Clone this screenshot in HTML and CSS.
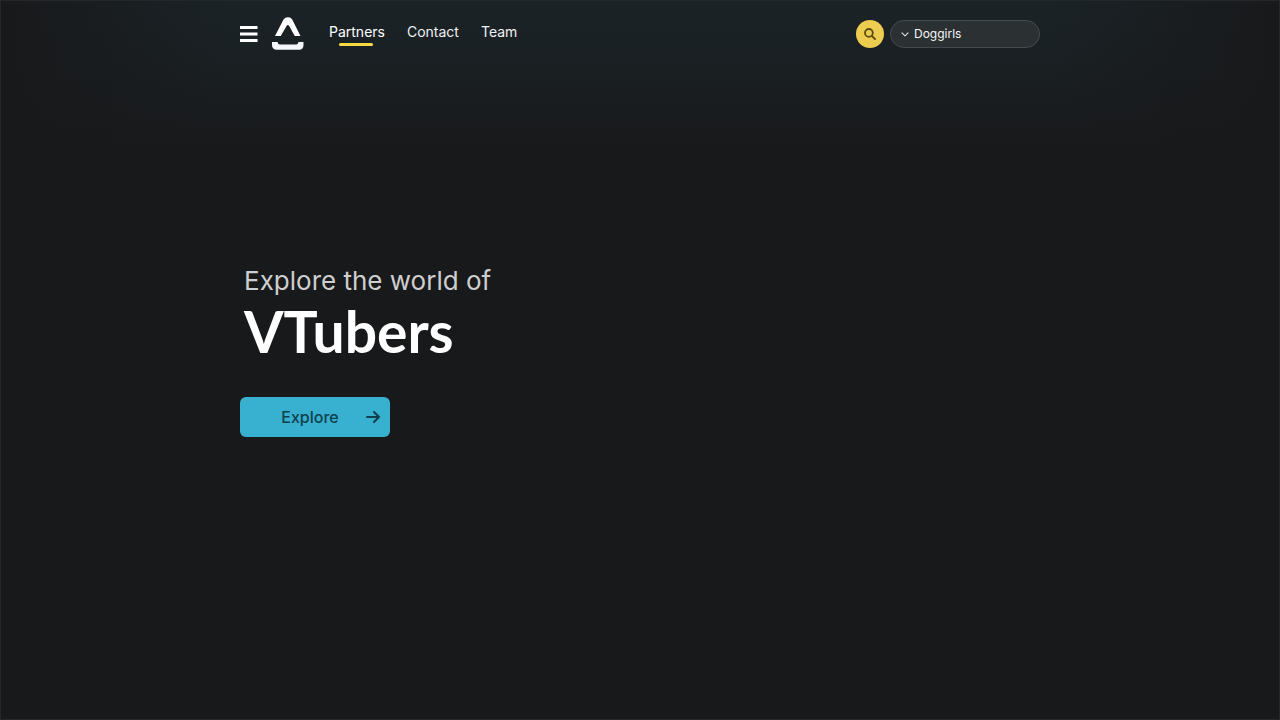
FILE: index.html
```html
<!DOCTYPE html>
<html lang="en">
<head>
<meta charset="utf-8">
<meta name="viewport" content="width=device-width, initial-scale=1">
<title>VTubers</title>
<link rel="stylesheet" href="styles.css">
</head>
<body class="page">
<header class="topbar">
  <button class="menu" type="button" aria-label="Menu">
    <svg width="18" height="16" viewBox="0 0 18 16" aria-hidden="true"><path d="M0 1.500h17.500M0 8h17.500M0 14.500h17.500" stroke="#fff" stroke-width="2.800"/></svg>
  </button>
  <a class="logo" href="#" aria-label="Home">
    <svg width="32" height="34" viewBox="0 0 32 34" aria-hidden="true"><path d="M3 19 11.500 2.500Q13 .2 16 .2T20.200 2.500L28.500 19H22.800L17.200 9Q15.800 7 14.500 9L8.800 19Z" fill="#fff"/><path d="M0 25H5.500Q6 27.500 8 27.500H24Q26 27.500 26.500 25H31.500V28Q31.500 32.800 27 32.800H5Q0 32.800 0 28Z" fill="#f4f7fc"/></svg>
  </a>
  <nav class="nav" aria-label="Main">
    <a class="nav-link nav-link-active" href="#" aria-current="page">Partners</a>
    <a class="nav-link" href="#">Contact</a>
    <a class="nav-link" href="#">Team</a>
  </nav>
  <form class="search">
    <button class="search-button" type="button" aria-label="Search">
      <svg width="12" height="12" viewBox="0 0 12 12" fill="none" stroke="#5a4b10" stroke-width="1.800" stroke-linecap="round" aria-hidden="true"><circle cx="4.900" cy="4.900" r="3.900"/><path d="m7.800 7.800 3.200 3.200"/></svg>
    </button>
    <label class="picker">
      <svg class="chevron" width="8" height="5" viewBox="0 0 8 5" fill="none" stroke="#d5d9da" stroke-width="1.200" stroke-linecap="round" stroke-linejoin="round" aria-hidden="true"><path d="m1 .8 3 3 3-3"/></svg>
      <select class="picker-select" aria-label="Category"><option>Doggirls</option></select>
    </label>
  </form>
</header>
<main class="hero">
  <h1 class="headline"><span class="lead">Explore the world of</span><span class="title">VTubers</span></h1>
  <button class="explore" type="button">
    <span class="explore-label">Explore</span>
    <svg width="14" height="12" viewBox="0 0 14 12" fill="none" stroke="#0e414d" stroke-width="2" stroke-linecap="round" stroke-linejoin="round" aria-hidden="true"><path d="M1 6h12M8 1l5 5-5 5"/></svg>
  </button>
</main>
</body>
</html>
```
FILE: styles.css
```css
* { box-sizing: border-box; }
.page {
  margin: 0;
  min-height: 100vh;
  border: 1px solid #252829;
  background:
    linear-gradient(90deg, #18191b 0%, transparent 18%, transparent 82%, #18191b 100%),
    linear-gradient(180deg, #1b2327 0, #1a2023 60px, #18191b 150px);
  color: #fff;
  font-family: Inter, "Liberation Sans", sans-serif;
}
button { border: 0; padding: 0; cursor: pointer; font-family: inherit; }
.topbar, .hero { width: 100%; max-width: 800px; margin: 0 auto; }
.topbar { display: flex; align-items: center; height: 66px; }
.menu { display: flex; background: none; }
.logo { display: flex; margin-left: 14px; }
.nav { display: flex; gap: 22px; margin: 0 0 4px 25px; }
.nav-link { position: relative; color: #eef1f2; font-size: 14px; line-height: 20px; text-decoration: none; }
.nav-link-active { color: #fff; }
.nav-link-active::after {
  content: "";
  position: absolute;
  left: 10px;
  right: 12px;
  bottom: -4px;
  height: 3px;
  border-radius: 2px;
  background: #f5da45;
}
.search { display: flex; align-items: center; gap: 6px; margin-left: auto; }
.search-button { display: grid; place-items: center; width: 28px; height: 28px; border-radius: 50%; background: #eccd50; }
.picker { display: flex; align-items: center; gap: 5px; width: 150px; height: 28px; padding: 0 10px; border: 1px solid #454b4e; border-radius: 14px; background: #2b3033; }
.chevron { flex: none; }
.picker-select { flex: 1; min-width: 0; padding: 0; border: 0; background: none; color: #f5f6f6; font: 12px/20px Inter, sans-serif; appearance: none; }
.hero { padding-top: 196px; }
.headline { display: flex; flex-direction: column; margin: 0 0 34px; padding-left: 4px; }
.lead { color: #cecece; font-size: 26px; font-weight: 400; line-height: 36px; }
.title { font-family: Lato, sans-serif; font-size: 57px; font-weight: 700; line-height: 64px; }
.explore { display: flex; align-items: center; width: 150px; height: 40px; padding: 0 10px; border-radius: 6px; background: #38b0cf; color: #0e414d; }
.explore-label { flex: 1; padding-left: 4px; font-size: 16px; font-weight: 500; line-height: 24px; }
```
